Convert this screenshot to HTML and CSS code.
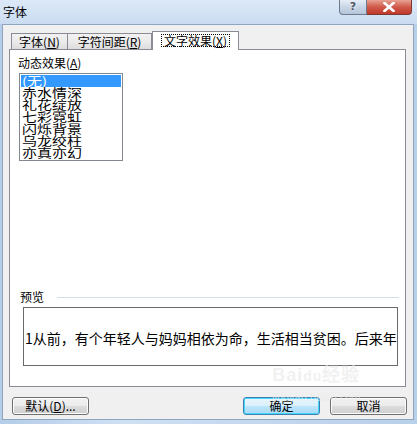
FILE: index.html
```html
<!DOCTYPE html>
<html lang="zh-CN">
<head>
    <meta charset="UTF-8">
    <title>字体</title>
    <link rel="stylesheet" href="styles.css">
</head>
<body>
    <div class="window">
        <div class="titlebar">
            <span class="title">字体</span>
            <div class="caption-buttons">
                <span class="cap-btn help">?</span>
                <span class="cap-btn close">
                    <svg width="12" height="10" viewBox="0 0 12 10">
                        <path d="M1.5 1 L10.5 9 M10.5 1 L1.5 9" stroke="#fff" stroke-width="2.6" stroke-linecap="square"/>
                    </svg>
                </span>
            </div>
        </div>

        <div class="client">
            <div class="tabs">
                <div class="tab tab-font">字体(<u>N</u>)</div>
                <div class="tab tab-spacing">字符间距(<u>R</u>)</div>
                <div class="tab tab-effects active"><span class="focus">文字效果(<u>X</u>)</span></div>
            </div>

            <div class="panel">
                <div class="field-label">动态效果(<u>A</u>)</div>
                <ul class="listbox">
                    <li class="selected"><span>(无)</span></li>
                    <li><span>赤水情深</span></li>
                    <li><span>礼花绽放</span></li>
                    <li><span>七彩霓虹</span></li>
                    <li><span>闪烁背景</span></li>
                    <li><span>乌龙绞柱</span></li>
                    <li><span>亦真亦幻</span></li>
                </ul>

                <div class="group-title">
                    <span>预览</span>
                    <div class="group-line"></div>
                </div>
                <div class="preview">1从前，有个年轻人与妈妈相依为命，生活相当贫困。后来年</div>
            </div>

            <div class="buttons">
                <button class="btn">默认(<u>D</u>)...</button>
                <div class="buttons-right">
                    <button class="btn btn-default">确定</button>
                    <button class="btn">取消</button>
                </div>
            </div>
        </div>

        <div class="watermark">
            <span class="wm-logo">Bai<span class="wm-du">du</span>经验</span>
            <span class="wm-url">jingyan.baidu.com</span>
        </div>
    </div>
</body>
</html>
```

FILE: styles.css
```css
body {
    margin: 0;
    font-family: "Noto Sans CJK SC", "Liberation Sans", sans-serif;
    font-size: 12px;
    color: #000;
    background: #fff;
}
u {
    text-decoration: underline;
    text-underline-offset: 1px;
}
.window {
    position: relative;
    width: 417px;
    height: 424px;
    background: linear-gradient(90deg, #b5cde8 0%, #cfe0f3 30%, #c4d8ee 60%, #b9d0ea 100%);
    overflow: hidden;
}
.titlebar {
    height: 24px;
    display: flex;
    justify-content: space-between;
    align-items: flex-start;
    background: linear-gradient(180deg, #dde9f7 0%, #cadcf1 100%);
}
.title {
    margin: 5px 0 0 3px;
    line-height: 14px;
    font-size: 12px;
}
.caption-buttons {
    display: flex;
    margin-right: 5px;
}
.cap-btn {
    height: 15px;
    display: flex;
    align-items: center;
    justify-content: center;
    box-sizing: border-box;
    border: 1px solid #6d7b8e;
    border-top: none;
}
.help {
    width: 28px;
    border-radius: 0 0 0 4px;
    background: linear-gradient(180deg, #e6eef7 0%, #c9d6e6 50%, #b5c5d9 100%);
    color: #4b5563;
    font-family: "DejaVu Sans", sans-serif;
    font-size: 11px;
    font-weight: bold;
    line-height: 14px;
    text-shadow: 0 0 2px #fff;
}
.close {
    width: 45px;
    border-left: none;
    border-color: #7a3a32;
    border-radius: 0 0 4px 0;
    background: linear-gradient(180deg, #e8a393 0%, #d0594a 50%, #c0392b 100%);
}
.client {
    height: 396px;
    margin: 0 3px 0 2px;
    box-sizing: border-box;
    border: 1px solid #8fa4be;
    background: #f0f0f0;
    display: flex;
    flex-direction: column;
}
.tabs {
    display: flex;
    align-items: flex-end;
    height: 18px;
    margin: 6px 0 0 8px;
}
.tab {
    height: 16px;
    box-sizing: border-box;
    border: 1px solid #898c95;
    border-bottom: none;
    background: linear-gradient(180deg, #f2f2f2 0%, #ebebeb 50%, #dddddd 100%);
    display: flex;
    align-items: center;
    justify-content: center;
    line-height: 14px;
}
.tab-font {
    width: 57px;
}
.tab-spacing {
    width: 84px;
    border-left: none;
}
.tab-effects {
    width: 87px;
}
.tab.active {
    position: relative;
    z-index: 1;
    height: 19px;
    margin-bottom: -1px;
    background: #fff;
    align-items: flex-start;
    padding-top: 1px;
}
.focus {
    border: 1px dotted #000;
    padding: 0 2px;
    line-height: 11px;
    height: 11px;
    margin-top: 1px;
}
.panel {
    height: 338px;
    margin: 0 7px 0 6px;
    box-sizing: border-box;
    border: 1px solid #898c95;
    background: #fff;
    display: flex;
    flex-direction: column;
}
.field-label {
    margin: 6px 0 0 8px;
    line-height: 14px;
}
.listbox {
    list-style: none;
    width: 104px;
    height: 88px;
    margin: 3px 0 0 9px;
    padding: 1px;
    box-sizing: border-box;
    border: 1px solid #828790;
}
.listbox li {
    height: 12px;
    line-height: 12px;
    padding-left: 1px;
    font-size: 12px;
}
.listbox li span {
    display: inline-block;
    transform: scaleX(1.25);
    transform-origin: left center;
}
.listbox li.selected {
    background: #3399ff;
    color: #fff;
}
.group-title {
    display: flex;
    align-items: center;
    margin: 129px 6px 0 10px;
    line-height: 14px;
}
.group-line {
    flex: 1;
    height: 1px;
    margin-left: 13px;
    background: #d5dfe5;
}
.preview {
    width: 375px;
    height: 59px;
    margin: 3px 0 0 13px;
    box-sizing: border-box;
    border: 1px solid #6a6a6a;
    display: flex;
    align-items: center;
    padding: 2px 0 0 1px;
    font-size: 14px;
    white-space: nowrap;
}
.buttons {
    display: flex;
    justify-content: space-between;
    margin: 10px 6px 0 9px;
}
.buttons-right {
    display: flex;
    gap: 10px;
}
.btn {
    width: 77px;
    height: 18px;
    padding: 0;
    font-family: inherit;
    font-size: 12px;
    line-height: 14px;
    color: #000;
    border: 1px solid #707070;
    border-radius: 3px;
    background: linear-gradient(180deg, #f2f2f2 0%, #ebebeb 50%, #dddddd 51%, #cfcfcf 100%);
    box-shadow: inset 0 0 0 1px #fcfcfc;
}
.btn-default {
    border-color: #3c7fb1;
    box-shadow: inset 0 0 0 1px #48d7fb;
    background: linear-gradient(180deg, #eaf6fd 0%, #d9f0fc 50%, #bee6fd 51%, #a7d9f5 100%);
}
.watermark {
    position: absolute;
    left: 272px;
    top: 366px;
    display: flex;
    flex-direction: column;
    align-items: center;
    color: rgba(235, 235, 235, 0.7);
    pointer-events: none;
}
.wm-logo {
    font-family: "Liberation Sans", sans-serif;
    font-size: 18px;
    font-weight: bold;
    line-height: 18px;
    letter-spacing: 1px;
}
.wm-du {
    font-size: 14px;
}
.wm-url {
    font-family: "Liberation Sans", sans-serif;
    font-size: 11px;
    line-height: 12px;
    margin-top: 6px;
}
```
